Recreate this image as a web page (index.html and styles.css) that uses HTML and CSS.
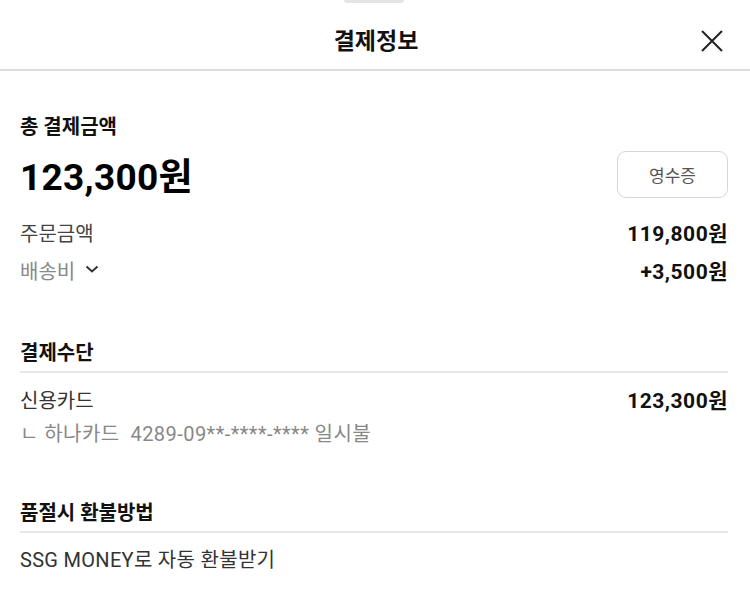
FILE: index.html
```html
<!DOCTYPE html>
<html lang="ko">
<head>
<meta charset="utf-8">
<link rel="stylesheet" href="styles.css">
</head>
<body>
<div class="sheet">
  <div class="handle"></div>
  <header class="header">
    <h1 class="title">결제정보</h1>
    <button class="close" aria-label="닫기">
      <svg width="24" height="24" viewBox="0 0 24 24"><path d="M2 2L22 22M22 2L2 22" stroke="#222" stroke-width="2" fill="none"/></svg>
    </button>
  </header>
  <main class="content">
    <section class="total">
      <h2 class="label-bold">총 결제금액</h2>
      <div class="total-row">
        <span class="total-amount">123,300원</span>
        <button class="receipt">영수증</button>
      </div>
      <div class="row row-order">
        <span class="row-label">주문금액</span>
        <span class="row-value">119,800원</span>
      </div>
      <div class="row">
        <span class="row-label muted">배송비
          <svg class="chev" width="14" height="8" viewBox="0 0 14 8"><path d="M1.5 1.5L7 6.5L12.5 1.5" stroke="#333" stroke-width="2" fill="none"/></svg>
        </span>
        <span class="row-value">+3,500원</span>
      </div>
    </section>
    <section class="block">
      <h2 class="block-title">결제수단</h2>
      <div class="row row-first">
        <span class="row-label dark">신용카드</span>
        <span class="row-value">123,300원</span>
      </div>
      <div class="sub">ㄴ 하나카드&nbsp; 4289-09**-****-**** 일시불</div>
    </section>
    <section class="block block-refund">
      <h2 class="block-title">품절시 환불방법</h2>
      <div class="plain">SSG MONEY로 자동 환불받기</div>
    </section>
  </main>
</div>
</body>
</html>
```

FILE: styles.css
```css
* { box-sizing: border-box; }
html, body { margin: 0; padding: 0; background: #fff; }
body {
  font-family: "Roboto", "Noto Sans CJK KR", sans-serif;
  color: #111;
  width: 750px;
  height: 606px;
  overflow: hidden;
}
.sheet { position: relative; }
.handle {
  position: absolute;
  left: 344px;
  top: 0;
  width: 60px;
  height: 3px;
  background: #e4e4e4;
  border-radius: 0 0 3px 3px;
}
.header {
  height: 71px;
  border-bottom: 2px solid #dcdcdc;
  display: flex;
  align-items: center;
  justify-content: center;
  position: relative;
}
.title {
  margin: 0;
  font-size: 23px;
  font-weight: 700;
  color: #111;
  padding-top: 9px;
  padding-left: 2px;
}
.close {
  position: absolute;
  right: 26px;
  top: 29px;
  width: 24px;
  height: 24px;
  padding: 0;
  border: 0;
  background: none;
  display: flex;
}
.content { padding: 0 22px 0 20px; }
.total { padding-top: 43px; }
.label-bold {
  margin: 0;
  font-size: 20px;
  font-weight: 700;
  line-height: 26px;
  color: #111;
}
.total-row {
  display: flex;
  justify-content: space-between;
  align-items: center;
  margin-top: 10px;
  height: 48px;
}
.total-amount {
  font-size: 37px;
  font-weight: 700;
  color: #000;
  letter-spacing: 0.3px;
}
.receipt {
  width: 111px;
  height: 47px;
  border: 1px solid #d6d6d6;
  border-radius: 9px;
  background: #fff;
  font-family: inherit;
  font-size: 17px;
  color: #555;
  padding: 0;
}
.row {
  display: flex;
  justify-content: space-between;
  align-items: center;
  height: 38px;
}
.row-order { margin-top: 15px; }
.row-label {
  font-size: 20px;
  color: #444;
  display: flex;
  align-items: center;
}
.row-label.muted { color: #888; }
.row-label.dark { color: #333; }
.chev { margin-left: 10px; margin-top: -2px; }
.row-value {
  font-size: 21px;
  font-weight: 700;
  color: #111;
  letter-spacing: 0.5px;
}
.block { padding-top: 51px; }
.block-refund { padding-top: 52px; }
.block-title {
  margin: 0;
  font-size: 20px;
  font-weight: 700;
  color: #111;
  line-height: 26px;
  padding-bottom: 5px;
  border-bottom: 2px solid #e8e8e8;
}
.row-first { margin-top: 7px; }
.sub {
  font-size: 20px;
  color: #888;
  line-height: 28px;
  margin-top: 2px;
  letter-spacing: 0.45px;
}
.plain {
  font-size: 20px;
  color: #333;
  margin-top: 11px;
  letter-spacing: 0.3px;
}
```
